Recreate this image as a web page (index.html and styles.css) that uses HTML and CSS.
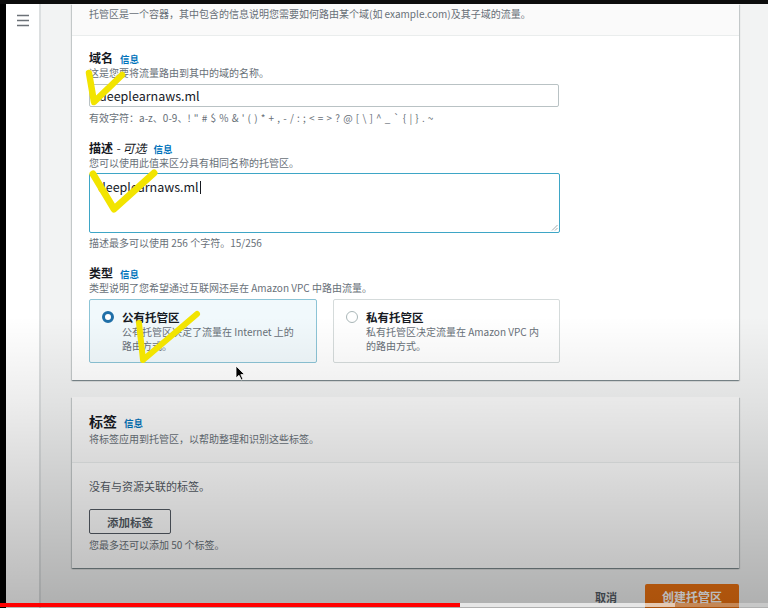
FILE: index.html
```html
<!DOCTYPE html>
<html lang="zh-CN">
<head>
<meta charset="utf-8">
<title>创建托管区</title>
<link rel="stylesheet" href="styles.css">
</head>
<body>
<div class="topbar"></div>
<div class="app">
  <div class="edge"></div>
  <nav class="sidenav">
    <svg class="burger" width="12" height="13" viewBox="0 0 12 13"><path d="M0 1.5h12M0 6.5h12M0 11.5h12" stroke="#6b7177" stroke-width="1.7" fill="none"/></svg>
  </nav>
  <main class="content">
    <section class="card">
      <div class="card-header">
        <p class="desc">托管区是一个容器，其中包含的信息说明您需要如何路由某个域(如 example.com)及其子域的流量。</p>
      </div>
      <div class="card-body">
        <div class="label">域名<a class="info">信息</a></div>
        <p class="desc">这是您要将流量路由到其中的域的名称。</p>
        <input class="input" type="text" value="deeplearnaws.ml">
        <p class="desc constraint">有效字符：a-z、0-9、! " # $ % &amp; ' ( ) * + , - / : ; &lt; = &gt; ? @ [ \ ] ^ _ ` { | } . ~</p>

        <div class="label gap">描述<em class="opt">&nbsp;- 可选</em><a class="info">信息</a></div>
        <p class="desc">您可以使用此值来区分具有相同名称的托管区。</p>
        <div class="textarea">deeplearnaws.ml<span class="caret"></span>
          <svg class="grip" width="7" height="7" viewBox="0 0 7 7"><path d="M6.5 1L1 6.5M6.5 4L4 6.5" stroke="#9aa3a6" stroke-width="0.9"/></svg>
        </div>
        <p class="desc hint">描述最多可以使用 256 个字符。15/256</p>

        <div class="label gap">类型<a class="info">信息</a></div>
        <p class="desc">类型说明了您希望通过互联网还是在 Amazon VPC 中路由流量。</p>
        <div class="tiles">
          <div class="tile selected">
            <span class="radio on"></span>
            <div class="tile-text">
              <div class="tile-title">公有托管区</div>
              <p class="desc">公有托管区决定了流量在 Internet 上的路由方式。</p>
            </div>
          </div>
          <div class="tile">
            <span class="radio"></span>
            <div class="tile-text">
              <div class="tile-title">私有托管区</div>
              <p class="desc">私有托管区决定流量在 Amazon VPC 内的路由方式。</p>
            </div>
          </div>
        </div>
      </div>
    </section>

    <section class="card card2">
      <div class="card2-header">
        <div class="title">标签<a class="info">信息</a></div>
        <p class="desc sub">将标签应用到托管区，以帮助整理和识别这些标签。</p>
      </div>
      <div class="card2-body">
        <p class="empty">没有与资源关联的标签。</p>
        <button class="btn">添加标签</button>
        <p class="desc note">您最多还可以添加 50 个标签。</p>
      </div>
    </section>

    <div class="footer">
      <span class="cancel">取消</span>
      <button class="primary">创建托管区</button>
    </div>
  </main>
</div>

<div class="vignette"></div>
<svg class="marks" width="768" height="608" viewBox="0 0 768 608">
  <path d="M89 73 L94 102 L122 75" stroke="#f2e400" stroke-width="6.5" fill="none" stroke-linecap="round" stroke-linejoin="round"/>
  <path d="M93 174 L114 209 L154 173" stroke="#f2e400" stroke-width="7" fill="none" stroke-linecap="round" stroke-linejoin="round"/>
  <path d="M139 323 L143 360 L197 314" stroke="#f2e400" stroke-width="6" fill="none" stroke-linecap="round" stroke-linejoin="round"/>
  <path d="M236 366 L236 378 L239 375.3 L241.3 380 L243 379.2 L240.8 374.6 L244.6 374.6 Z" fill="#000" stroke="#fff" stroke-width="0.8"/>
</svg>
<div class="progress"><div class="buffered"></div><div class="played"></div></div>
</body>
</html>
```

FILE: styles.css
```css
* { box-sizing: border-box; }
html, body { margin: 0; padding: 0; }
body {
  width: 768px;
  height: 608px;
  overflow: hidden;
  position: relative;
  background: #000;
  font-family: "Noto Sans CJK SC", "Noto Sans", sans-serif;
  color: #16191f;
}
p { margin: 0; }

.topbar { height: 4px; background: #0c0c0c; }
.app { display: flex; height: 604px; }
.edge { width: 6px; background: #000; }
.sidenav {
  width: 35px;
  background: #fff;
  border-right: 2px solid #dcdfe0;
  padding: 10px 0 0 11px;
}
.burger { display: block; }

.content {
  flex: 1;
  background: #f2f3f3;
  padding: 0 29px 0 31px;
}

.card {
  background: #fff;
  box-shadow: 0 1px 1px 0 rgba(0,28,36,.3), 1px 1px 1px 0 rgba(0,28,36,.15), -1px 1px 1px 0 rgba(0,28,36,.15);
}
.card-header {
  height: 32px;
  background: #fafafa;
  border-bottom: 1px solid #eaeded;
  padding: 3px 17px 0;
}
.card-body { padding: 14px 17px 17px; }

.desc { font-size: 10px; line-height: 14px; color: #687078; }

.label {
  height: 16px;
  font-size: 12px;
  font-weight: 700;
  line-height: 16px;
  display: flex;
  align-items: baseline;
}
.label.gap { margin-top: 15px; }
.opt { font-style: italic; font-weight: 400; }
.info {
  font-size: 9.5px;
  font-weight: 700;
  line-height: 1;
  color: #0073bb;
  margin-left: 7px;
}

.input {
  display: block;
  width: 470px;
  height: 23px;
  margin: 4px 0 0;
  border: 1px solid #b9c2c4;
  border-radius: 2px;
  padding: 0 9px;
  font-family: inherit;
  font-size: 12.5px;
  color: #16191f;
  background: #fff;
  outline: none;
}
.constraint { margin-top: 4px; word-spacing: 0.95px; }

.textarea {
  position: relative;
  width: 471px;
  height: 60px;
  margin-top: 3px;
  border: 1px solid #3ea6c6;
  border-radius: 2px;
  padding: 5px 8px;
  font-size: 12.5px;
  line-height: 16px;
}
.caret {
  display: inline-block;
  width: 1px;
  height: 13px;
  background: #16191f;
  vertical-align: -2px;
  margin-left: 1px;
}
.grip { position: absolute; right: 1px; bottom: 1px; }
.hint { margin-top: 3px; }

.tiles {
  display: grid;
  grid-template-columns: 228px 227px;
  column-gap: 16px;
  margin-top: 4px;
}
.tile {
  height: 64px;
  border: 1px solid #d5dbdb;
  border-radius: 2px;
  padding: 9px 12px;
  display: flex;
  gap: 8px;
  background: #fff;
}
.tile.selected { background: #f1f9fc; border-color: #8cc4d6; }
.tile-text { width: 176px; }
.radio {
  flex: none;
  width: 12px;
  height: 12px;
  margin-top: 2px;
  border-radius: 50%;
  border: 1px solid #aab7b8;
  background: #fff;
}
.radio.on { border: 3.5px solid #1f6fa8; }
.tile-title { font-size: 11.5px; font-weight: 700; line-height: 16px; height: 16px; }

.card2 { margin-top: 17px; }
.card2-header {
  height: 66px;
  background: #fafafa;
  border-bottom: 1px solid #eaeded;
  padding: 15px 17px 0;
}
.title {
  height: 18px;
  font-size: 14px;
  font-weight: 700;
  line-height: 18px;
  display: flex;
  align-items: baseline;
}
.sub { margin-top: 2px; }
.card2-body { padding: 15px 17px 16px; }
.empty { font-size: 11px; line-height: 16px; height: 16px; color: #545b64; }
.btn {
  display: block;
  margin-top: 15px;
  width: 82px;
  height: 25px;
  border: 1px solid #545b64;
  border-radius: 2px;
  background: #fff;
  font-family: inherit;
  font-size: 11.5px;
  font-weight: 700;
  color: #545b64;
  padding: 0;
}
.note { margin-top: 4px; }

.footer {
  margin-top: 16px;
  display: flex;
  justify-content: flex-end;
  align-items: center;
}
.cancel {
  font-size: 11px;
  line-height: 16px;
  font-weight: 700;
  color: #545b64;
  margin-right: 28px;
}
.primary {
  height: 26px;
  padding: 0 17px;
  border: none;
  border-radius: 2px;
  background: #ec7211;
  color: #fff;
  font-family: inherit;
  font-size: 12px;
  line-height: 16px;
  font-weight: 700;
}

.vignette {
  position: absolute;
  inset: 0;
  pointer-events: none;
  background: linear-gradient(to bottom, rgba(0,0,0,0) 0%, rgba(0,0,0,0) 52%, rgba(0,0,0,0.07) 66%, rgba(0,0,0,0.28) 100%);
}
.marks { position: absolute; left: 0; top: 0; pointer-events: none; }

.progress {
  position: absolute;
  left: 0;
  right: 0;
  bottom: 1px;
  height: 4px;
  background: rgba(255,255,255,0.3);
}
.buffered { position: absolute; left: 0; top: 0; bottom: 0; width: 675px; background: rgba(255,255,255,0.55); }
.played { position: absolute; left: 0; top: 0; bottom: 0; width: 460px; background: #ff0000; }
```
